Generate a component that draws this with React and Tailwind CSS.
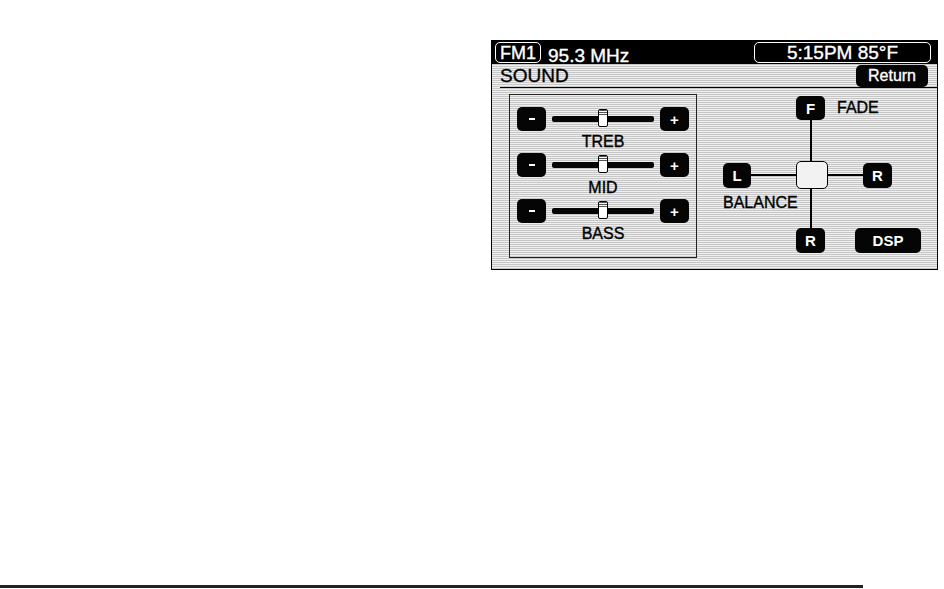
const dither =
  "bg-[repeating-linear-gradient(0deg,#c6c6c6_0px,#c6c6c6_1px,#efefef_1px,#efefef_2px)]";

// the reference type is a bit heavier than plain Liberation Sans
const heavy = "[-webkit-text-stroke:0.35px_currentColor]";

function Key({ children, className = "" }) {
  return (
    <div
      className={`flex items-center justify-center rounded-[5px] bg-[#050505] text-white leading-none ${className}`}
    >
      {children}
    </div>
  );
}

function Slider({ label }) {
  return (
    <div className="flex flex-col">
      <div className="flex h-[24px] items-center">
        {/* minus */}
        <Key className="h-[24px] w-[29px]">
          <span className="block h-[2px] w-[6px] bg-white" />
        </Key>
        <div className="relative mx-[6px] flex h-[24px] flex-1 items-center">
          <div className="h-[6px] w-full rounded-[2px] bg-[#050505]" />
          {/* thumb */}
          <div className="absolute left-1/2 top-[2px] flex h-[18px] w-[10px] -translate-x-1/2 flex-col overflow-hidden rounded-[2px] border-[1.5px] border-black bg-white">
            <div className="h-[5px] w-full bg-[repeating-linear-gradient(0deg,#555_0px,#555_1px,#fff_1px,#fff_2px)]" />
          </div>
        </div>
        {/* plus */}
        <Key className="h-[24px] w-[29px] text-[15px] font-bold">+</Key>
      </div>
      <div className={`flex h-[22px] items-center justify-center text-[16px] leading-none text-black ${heavy}`}>
        {label}
      </div>
    </div>
  );
}

export default function App() {
  return (
    <div
      className="flex h-[589px] w-[944px] flex-col overflow-hidden bg-white"
      style={{ fontFamily: '"Liberation Sans", Arial, sans-serif' }}
    >
      {/* radio screen */}
      <div
        className={`ml-[491px] mt-[40px] flex h-[230px] w-[447px] flex-col border border-black ${dither}`}
      >
        {/* status bar */}
        <div className="flex h-[23px] items-center bg-black">
          <div className={`ml-[3px] flex h-[21px] items-center rounded-[5px] border border-white px-[4px] text-[18px] leading-none text-white ${heavy}`}>
            FM1
          </div>
          <div className={`ml-[7px] mt-[5px] text-[19px] leading-none text-white ${heavy}`}>95.3 MHz</div>
          <div className={`ml-auto mr-[6px] flex h-[21px] w-[177px] items-center justify-center rounded-[5px] border border-white text-[19px] leading-none text-white ${heavy}`}>
            5:15PM 85°F
          </div>
        </div>

        {/* title row */}
        <div className="ml-[8px] flex h-[24px] items-center border-b border-black">
          <span className={`text-[19px] leading-none text-black ${heavy}`}>SOUND</span>
          <Key className={`ml-auto mr-[9px] h-[22px] w-[72px] text-[16px] ${heavy}`}>Return</Key>
        </div>

        {/* body */}
        <div className="flex pl-[17px] pt-[6px]">
          {/* tone controls */}
          <div className="flex h-[164px] w-[188px] flex-col border border-[#222] px-[7px] pt-[12px]">
            <Slider label="TREB" />
            <Slider label="MID" />
            <Slider label="BASS" />
          </div>

          {/* fade / balance */}
          <div className="ml-[26px] mt-[2px] flex flex-col">
            <div className="flex h-[24px] items-center">
              <Key className="ml-[73px] h-[24px] w-[29px] text-[15px] font-bold">F</Key>
              <span className={`ml-[12px] text-[16px] leading-none text-black ${heavy}`}>FADE</span>
            </div>
            <div className="ml-[87px] h-[41px] w-[2px] bg-black" />
            <div className="flex h-[28px] items-center">
              <Key className="h-[25px] w-[28px] text-[15px] font-bold">L</Key>
              <div className="h-[2px] w-[45px] bg-black" />
              <div className="h-[28px] w-[32px] rounded-[5px] border-[1.5px] border-black bg-[#f2f2f2]" />
              <div className="h-[2px] w-[35px] bg-black" />
              <Key className="h-[25px] w-[29px] text-[15px] font-bold">R</Key>
            </div>
            <div className="flex h-[39px]">
              <span className={`mt-[6px] w-[87px] text-[16px] leading-none text-black ${heavy}`}>BALANCE</span>
              <div className="h-[39px] w-[2px] bg-black" />
            </div>
            <div className="flex h-[25px] items-center">
              <Key className="ml-[73px] h-[25px] w-[29px] text-[15px] font-bold">R</Key>
              <Key className="ml-[30px] h-[25px] w-[66px] text-[15px] font-bold">DSP</Key>
            </div>
          </div>
        </div>
      </div>

      {/* page rule */}
      <div className="mb-[1px] mt-auto h-[3px] w-[863px] bg-[#222]" />
    </div>
  );
}
